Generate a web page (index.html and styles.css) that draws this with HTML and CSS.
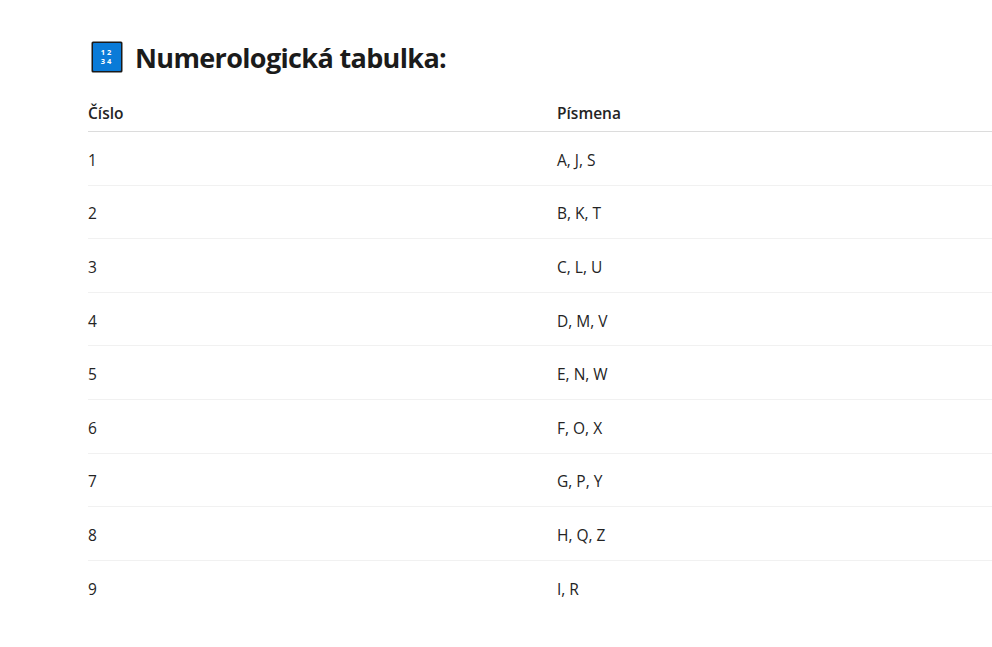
FILE: index.html
```html
<!DOCTYPE html>
<html lang="cs">
<head>
<meta charset="utf-8">
<title>Numerologická tabulka</title>
<link rel="stylesheet" href="styles.css">
</head>
<body>
<div class="page">
  <h2 class="title">
    <svg class="keycap" width="32" height="32" viewBox="0 0 32 32" aria-hidden="true">
      <rect x="0.5" y="0.5" width="31" height="31" rx="1.5" fill="#1a1a1a"/>
      <rect x="2" y="2" width="28" height="28" rx="1" fill="#0a7bd8"/>
      <text x="16" y="14" text-anchor="middle" font-family="Open Sans, sans-serif" font-size="7.5" font-weight="700" fill="#fff" letter-spacing="2">12</text>
      <text x="16" y="23" text-anchor="middle" font-family="Open Sans, sans-serif" font-size="7.5" font-weight="700" fill="#fff" letter-spacing="2">34</text>
    </svg>
    <span>Numerologická tabulka:</span>
  </h2>
  <table class="numtable">
    <thead>
      <tr><th class="c1">Číslo</th><th>Písmena</th></tr>
    </thead>
    <tbody>
      <tr><td class="c1">1</td><td>A, J, S</td></tr>
      <tr><td class="c1">2</td><td>B, K, T</td></tr>
      <tr><td class="c1">3</td><td>C, L, U</td></tr>
      <tr><td class="c1">4</td><td>D, M, V</td></tr>
      <tr><td class="c1">5</td><td>E, N, W</td></tr>
      <tr><td class="c1">6</td><td>F, O, X</td></tr>
      <tr><td class="c1">7</td><td>G, P, Y</td></tr>
      <tr><td class="c1">8</td><td>H, Q, Z</td></tr>
      <tr><td class="c1">9</td><td>I, R</td></tr>
    </tbody>
  </table>
</div>
</body>
</html>
```
FILE: styles.css
```css
html, body {
  margin: 0;
  padding: 0;
  background: #ffffff;
  overflow: hidden;
}
body {
  font-family: "Open Sans", "Noto Sans", sans-serif;
  color: #242424;
}
.page {
  padding: 41px 0 0 88px;
}
.title {
  display: flex;
  align-items: center;
  gap: 12px;
  margin: 0 0 0 3px;
  height: 32px;
  font-size: 27px;
  font-weight: 700;
  letter-spacing: -0.65px;
  color: #1b1b1b;
}
.keycap {
  display: block;
  flex: none;
}
.numtable {
  margin-top: 22px;
  width: 904px;
  border-collapse: collapse;
  font-size: 15.5px;
}
.numtable th {
  text-align: left;
  font-weight: 600;
  font-size: 15.5px;
  height: 36px;
  padding: 0;
  vertical-align: middle;
  border-bottom: 1.5px solid #dcdcdc;
}
.numtable td {
  padding: 3px 0 0 0;
  height: 49.6px;
  border-bottom: 1px solid #f1f1f1;
  vertical-align: middle;
}
.numtable tbody tr:last-child td {
  border-bottom: none;
}
.numtable .c1 {
  width: 469px;
}
```
